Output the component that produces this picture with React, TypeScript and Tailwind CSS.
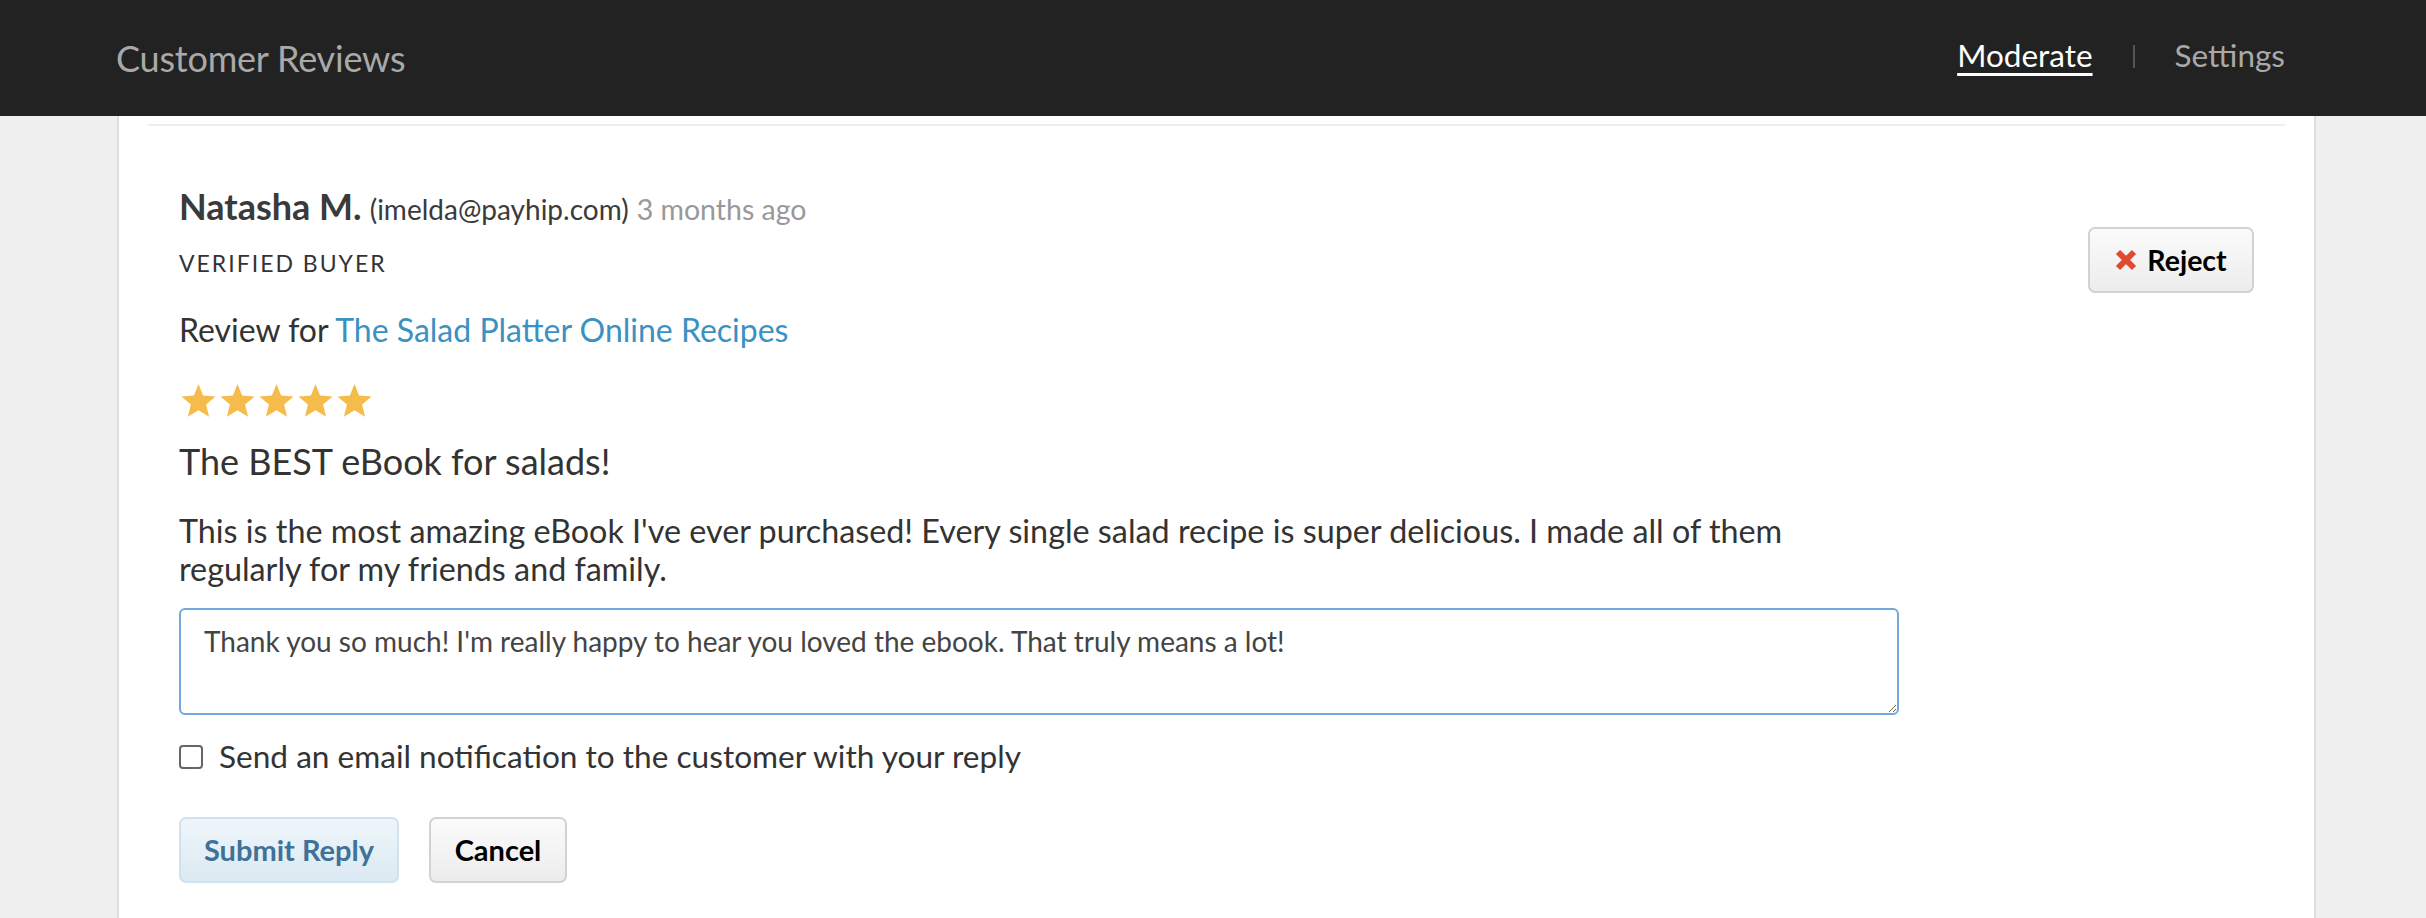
import React from "react";

const font = { fontFamily: "Lato, 'Open Sans', sans-serif" };

function Star() {
  return (
    <svg viewBox="0 0 24 24" className="w-[39px] h-[38px]" aria-hidden>
      <polygon
        fill="#f6bc4b"
        points="12,1.2 14.9,8.5 22.8,9.1 16.8,14.2 18.7,22 12,17.8 5.3,22 7.2,14.2 1.2,9.1 9.1,8.5"
      />
    </svg>
  );
}

function RedX() {
  return (
    <svg viewBox="0 0 22 22" className="w-[22px] h-[22px]" aria-hidden>
      <path d="M3 3 L19 19 M19 3 L3 19" stroke="#e04a33" strokeWidth="6" strokeLinecap="butt" />
    </svg>
  );
}

export default function App() {
  return (
    <div className="min-h-screen bg-[#f0f0f0]" style={font}>
      {/* Header */}
      <header className="h-[116px] bg-[#222222] flex items-center justify-between pl-[116px] pr-[141px]">
        <h1 className="text-[36px] text-[#a9a9a9] tracking-[-0.2px]">Customer Reviews</h1>
        <nav className="flex items-center gap-[40px] text-[31.5px] -mt-[4px]">
          <a className="text-white underline decoration-[3px] underline-offset-[6px]">Moderate</a>
          <span className="w-[2px] h-[23px] bg-[#555]" />
          <a className="text-[#a9a9a9]">Settings</a>
        </nav>
      </header>

      {/* Card */}
      <main className="ml-[117px] mr-[110px] bg-white border-x-2 border-[#dddddd] min-h-[802px]">
        <div className="pt-[8px] px-[29px]">
          <div className="h-[2px] bg-[#eeeeee]" />
        </div>

        <section className="px-[60px] flex justify-between text-[#333]">
          <div className="w-[1720px]">
            {/* Name row */}
            <div className="mt-[60px] h-[40px] flex items-baseline gap-[8px]">
              <span className="text-[36px] font-bold text-[#3a3a3a] leading-[40px]">Natasha M.</span>
              <span className="text-[28px] text-[#3a3a3a]">(imelda@payhip.com)</span>
              <span className="text-[28.5px] text-[#999]">3 months ago</span>
            </div>

            <div className="mt-[22px] h-[30px] leading-[30px] text-[23px] tracking-[2px] text-[#333]">
              VERIFIED BUYER
            </div>

            <div className="mt-[32px] h-[40px] leading-[40px] text-[32px] text-[#333]">
              Review for <a className="text-[#3b91c2]">The Salad Platter Online Recipes</a>
            </div>

            <div className="mt-[32px] flex h-[38px]">
              <Star />
              <Star />
              <Star />
              <Star />
              <Star />
            </div>

            <h2 className="mt-[21px] h-[40px] leading-[40px] text-[36px] text-[#333]">
              The BEST eBook for salads!
            </h2>

            <p className="mt-[31px] w-[1690px] leading-[38px] text-[32.3px] text-[#333]">
              This is the most amazing eBook I've ever purchased! Every single salad recipe is super delicious. I made
              all of them regularly for my friends and family.
            </p>

            <textarea
              className="mt-[20px] block w-[1720px] h-[107px] border-2 border-[#72a9dd] rounded-[6px] pl-[23px] pr-[20px] pt-[14px] text-[28px] leading-[34px] text-[#444] outline-none"
              defaultValue="Thank you so much! I'm really happy to hear you loved the ebook. That truly means a lot!"
            />

            <label className="mt-[27px] h-[30px] flex items-center gap-[16px] text-[31.6px] text-[#333]">
              <span className="w-[24px] h-[24px] border-2 border-[#666] rounded-[4px] bg-white" />
              Send an email notification to the customer with your reply
            </label>

            <div className="mt-[45px] flex gap-[30px] pb-[40px]">
              <button className="h-[66px] w-[220px] rounded-[7px] border-2 border-[#cfe2ee] bg-gradient-to-b from-[#eff6fa] to-[#dbe9f2] text-[29px] font-bold text-[#3f7298]">
                Submit Reply
              </button>
              <button className="h-[66px] w-[138px] rounded-[7px] border-2 border-[#d2d2d2] bg-gradient-to-b from-[#fbfbfb] to-[#ececec] text-[29px] font-bold text-black">
                Cancel
              </button>
            </div>
          </div>

          <div className="mt-[101px]">
            <button className="h-[66px] w-[166px] rounded-[7px] border-2 border-[#d2d2d2] bg-gradient-to-b from-[#fbfbfb] to-[#ececec] flex items-center justify-center gap-[10px] text-[28.5px] font-bold text-black">
              <RedX />
              Reject
            </button>
          </div>
        </section>
      </main>
    </div>
  );
}
